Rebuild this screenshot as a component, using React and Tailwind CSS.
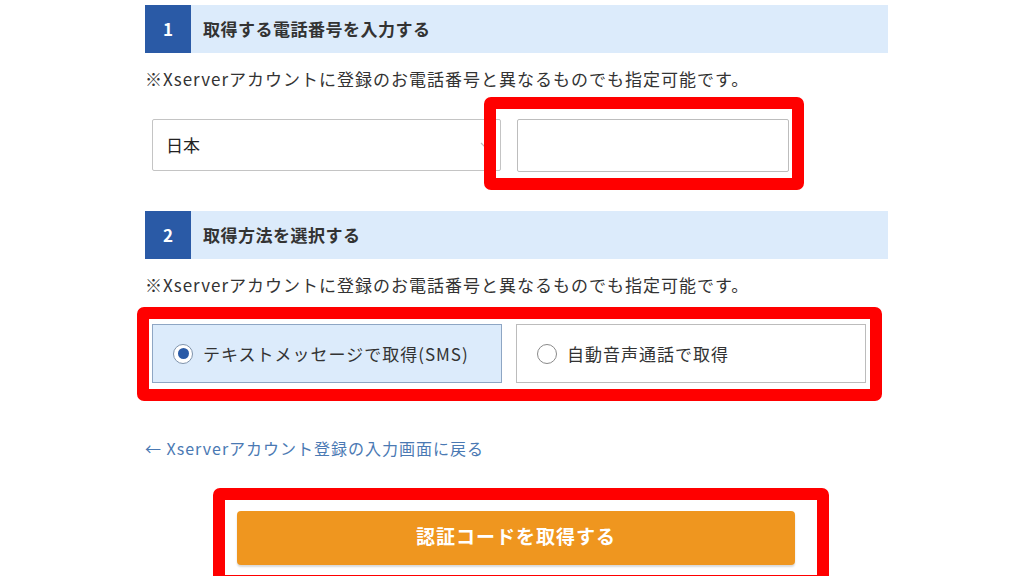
import React from "react";

const font = { fontFamily: '"Noto Sans CJK JP", "Noto Sans", sans-serif' };

const SectionHeader = ({ num, title }) => (
  <div className="flex h-[48px] w-[743px] bg-[#dcebfb]">
    <div className="flex w-[46px] items-center justify-center bg-[#2a5aa6] text-[17px] font-bold text-white">
      {num}
    </div>
    <div className="flex items-center pl-[12px] text-[17px] font-bold tracking-[0.5px] text-[#333]">{title}</div>
  </div>
);

const Note = () => (
  <p className="mt-[16px] h-[20px] text-[17px] leading-[20px] tracking-[1px] text-[#333]">
    ※Xserverアカウントに登録のお電話番号と異なるものでも指定可能です。
  </p>
);

const RedBox = ({ className }) => (
  <div className={"pointer-events-none absolute rounded-[7px] border-[12px] border-[#ff0000] " + className}></div>
);

const Radio = ({ checked, label }) => (
  <label
    className={
      "flex h-[59px] w-[350px] items-center gap-[10px] border pl-[20px] text-[17px] tracking-[1px] text-[#333] " +
      (checked ? "border-[#8ea6c4] bg-[#dcebfb]" : "border-[#bcbcbc] bg-white")
    }
  >
    <span
      className={
        "flex h-[20px] w-[20px] items-center justify-center rounded-full border-[1.5px] bg-white " +
        (checked ? "border-[#7f93ab]" : "border-[#8a8a8a]")
      }
    >
      {checked && <span className="h-[11px] w-[11px] rounded-full bg-[#2a5aa6]"></span>}
    </span>
    {label}
  </label>
);

export default function App() {
  return (
    <div className="h-[576px] w-[1024px] overflow-hidden bg-white" style={font}>
      <div className="ml-[145px] w-[743px] pt-[5px]">
        <SectionHeader num="1" title="取得する電話番号を入力する" />
        <Note />

        {/* phone number row */}
        <div className="mt-[30px] flex gap-[16px] pl-[7px]">
          <div className="flex h-[52px] w-[349px] items-center justify-between rounded-[2px] border border-[#c4c4c4] pl-[13px] pr-[10px] text-[17px] text-[#222]">
            <span>日本</span>
            <svg width="10" height="10" viewBox="0 0 10 10" className="text-[#bbb]">
              <path d="M1 3 L5 7 L9 3" fill="none" stroke="currentColor" strokeWidth="1.2" />
            </svg>
          </div>
          <div className="relative">
            <input className="h-[53px] w-[272px] rounded-[2px] border border-[#bdbdbd] bg-white" />
            <RedBox className="-left-[33px] -top-[22px] -right-[15px] -bottom-[18px]" />
          </div>
        </div>

        <div className="mt-[39px]">
          <SectionHeader num="2" title="取得方法を選択する" />
        </div>
        <Note />

        {/* method row */}
        <div className="relative ml-[7px] mt-[29px] flex w-[714px] gap-[14px]">
          <Radio checked label="テキストメッセージで取得(SMS)" />
          <Radio label="自動音声通話で取得" />
          <RedBox className="-left-[15px] -top-[17px] -right-[16px] -bottom-[18px]" />
        </div>

        <a className="mt-[55px] block h-[20px] text-[16px] leading-[20px] tracking-[1px] text-[#4a79b3]">
          ← Xserverアカウント登録の入力画面に戻る
        </a>

        <div className="relative ml-[92px] mt-[53px] w-[558px]">
          <button className="flex h-[54px] w-[558px] items-center justify-center rounded-[4px] bg-[#ef961f] pb-[4px] text-[19px] font-bold tracking-[1px] text-white shadow-[0_2px_2px_rgba(0,0,0,0.15)]">
            認証コードを取得する
          </button>
          <RedBox className="-left-[24px] -top-[23px] -right-[34px] -bottom-[22px]" />
        </div>
      </div>
    </div>
  );
}
